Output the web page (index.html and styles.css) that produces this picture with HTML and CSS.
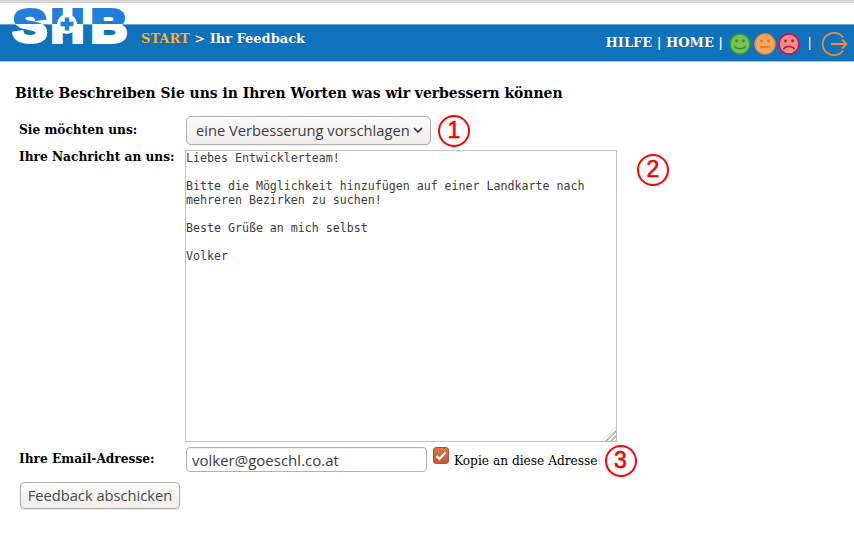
FILE: index.html
```html
<!DOCTYPE html>
<html lang="de">
<head>
<meta charset="utf-8">
<title>Ihr Feedback</title>
<link rel="stylesheet" href="styles.css">
</head>
<body>
<header class="top">
  <div class="bar">
    <svg class="logo" width="120" height="58" viewBox="0 -6 120 58" aria-label="SHB">
      <defs>
        <linearGradient id="split" gradientUnits="userSpaceOnUse" x1="0" y1="0" x2="0" y2="42">
          <stop offset="0.429" stop-color="#1f7fdb"/>
          <stop offset="0.429" stop-color="#fff"/>
        </linearGradient>
      </defs>
      <g class="logo-text">
        <text x="2" y="35.600" textLength="34" lengthAdjust="spacingAndGlyphs">S</text>
        <text x="40" y="35.600" textLength="33" lengthAdjust="spacingAndGlyphs">H</text>
        <text x="80" y="35.600" textLength="36" lengthAdjust="spacingAndGlyphs">B</text>
      </g>
      <circle cx="56" cy="18" r="10" fill="#fff"/>
      <path d="M56 11.500v13M49.500 18h13" stroke="#1f7fdb" stroke-width="4.500" fill="none"/>
    </svg>
    <div class="crumbs"><span class="start">START</span> &gt; Ihr Feedback</div>
    <nav class="nav">
      <span class="navtext">HILFE | HOME |</span>
      <svg class="smiley" width="22" height="22" viewBox="0 0 22 22">
        <circle cx="11" cy="11" r="10" fill="#7cc04f" stroke="#2f9a4a" stroke-width="1.500"/>
        <circle cx="7.500" cy="8" r="1.400" fill="#2c8a40"/><circle cx="14.500" cy="8" r="1.400" fill="#2c8a40"/>
        <path d="M5.500 13c1.500 3.500 9.500 3.500 11 0" stroke="#2c8a40" stroke-width="1.500" fill="none"/>
      </svg>
      <svg class="smiley" width="22" height="22" viewBox="0 0 22 22">
        <circle cx="11" cy="11" r="10" fill="#fba45c" stroke="#f08a36" stroke-width="1.500"/>
        <circle cx="7.500" cy="8" r="1.400" fill="#d9772c"/><circle cx="14.500" cy="8" r="1.400" fill="#d9772c"/>
        <path d="M6 14h10" stroke="#d9772c" stroke-width="1.500" fill="none"/>
      </svg>
      <svg class="smiley" width="22" height="22" viewBox="0 0 22 22">
        <circle cx="11" cy="11" r="10" fill="#f58b8b" stroke="#c8144a" stroke-width="1.500"/>
        <circle cx="7.500" cy="8" r="1.400" fill="#b5173f"/><circle cx="14.500" cy="8" r="1.400" fill="#b5173f"/>
        <path d="M5.500 16.500c1.500-4 9.500-4 11 0" stroke="#b5173f" stroke-width="1.500" fill="none"/>
      </svg>
      <span class="navtext sep">|</span>
      <svg class="exit" width="26" height="26" viewBox="0 0 26 26">
        <path d="M21 6.500A11.200 11.200 0 1 0 21 19.500" stroke="#f68a2c" stroke-width="1.800" fill="none"/>
        <path d="M9 13h15.500M20 8.500l4.500 4.500-4.500 4.500" stroke="#f68a2c" stroke-width="1.800" fill="none"/>
      </svg>
    </nav>
  </div>
</header>
<main class="content">
  <h1 class="title">Bitte Beschreiben Sie uns in Ihren Worten was wir verbessern können</h1>
  <form class="form">
    <label class="lbl lbl-select" for="kind">Sie möchten uns:</label>
    <div class="field field-select">
      <div class="select" id="kind"><span>eine Verbesserung vorschlagen</span>
        <svg width="10" height="6" viewBox="0 0 10 6"><path d="M1 1l4 4 4-4" stroke="#333" stroke-width="1.700" fill="none"/></svg>
      </div>
      <span class="num">1</span>
    </div>
    <label class="lbl lbl-msg" for="msg">Ihre Nachricht an uns:</label>
    <div class="field field-msg">
      <div class="msg-wrap">
        <textarea class="msg" id="msg">Liebes Entwicklerteam!

Bitte die Möglichkeit hinzufügen auf einer Landkarte nach
mehreren Bezirken zu suchen!

Beste Grüße an mich selbst

Volker</textarea>
        <span class="grip"></span>
      </div>
      <span class="num num-2">2</span>
    </div>
    <label class="lbl lbl-mail" for="mail">Ihre Email-Adresse:</label>
    <div class="field field-mail">
      <input class="mail" id="mail" type="text" value="volker@goeschl.co.at">
      <span class="check"><svg width="12" height="10" viewBox="0 0 12 10"><path d="M1.500 5l3 3 6-6.500" stroke="#fff" stroke-width="2.200" fill="none"/></svg></span>
      <span class="copy">Kopie an diese Adresse</span>
      <span class="num num-3">3</span>
    </div>
    <button class="send" type="button">Feedback abschicken</button>
  </form>
</main>
</body>
</html>
```

FILE: styles.css
```css
html, body { margin: 0; padding: 0; background: #fff; }
body { width: 854px; height: 557px; overflow: hidden; font-family: "DejaVu Serif", serif; color: #000; }

.top { border-top: 3px solid #d9d7d3; padding-top: 21px; }
.bar {
  height: 36px;
  background: #0f72bd;
  border-top: 1px solid #6aa5d6;
  border-bottom: 1px solid #9cc4e4;
  display: flex;
  align-items: flex-start;
  position: relative;
  color: #fff;
  font-weight: bold;
}
.logo { position: absolute; left: 11px; top: -25px; }
.logo-text {
  font-family: "Liberation Sans", sans-serif;
  font-weight: bold;
  font-size: 46px;
  stroke-width: 4px;
  fill: url(#split);
  stroke: url(#split);
}
.crumbs { margin: 6px 0 0 141px; font-size: 13px; line-height: 16px; text-shadow: 0 0 1px #0a4f85; }
.start { color: #f8b33e; }
.nav { margin-left: auto; display: flex; align-items: center; height: 36px; padding-right: 6px; }
.navtext { font-size: 13px; line-height: 16px; text-shadow: 0 0 1px #0a4f85; }
.smiley { margin-left: 4px; margin-right: -1.500px; margin-top: 1px; flex: none; }
.navtext + .smiley { margin-left: 6px; }
.sep { margin-left: 9px; font-weight: normal; }
.exit { margin-left: 10px; flex: none; margin-top: 1px; }

.content { padding: 22px 0 0 15px; }
.title { margin: 0; font-size: 13.920px; line-height: 18px; font-weight: bold; }
.form {
  margin-top: 14px;
  display: grid;
  grid-template-columns: 170px 1fr;
  row-gap: 5px;
  padding-left: 4px;
}
.lbl { font-size: 12.200px; font-weight: bold; line-height: 16px; white-space: nowrap; }
.lbl-select { padding-top: 6px; }
.lbl-msg { margin-top: -1px; }
.lbl-mail { padding-top: 4px; }
.field { display: flex; align-items: flex-start; }
.field-select { height: 29px; margin-left: -3px; align-items: center; }
.select {
  box-sizing: border-box;
  width: 245px;
  height: 29px;
  border: 1px solid #b3b1ad;
  border-radius: 5px;
  background: linear-gradient(#fbfbfa, #efeeed);
  box-shadow: 0 1px 1px rgba(0,0,0,.08);
  display: flex;
  align-items: center;
  justify-content: space-between;
  padding: 0 7px 2px 9px;
  font: 14.700px "Open Sans", "Noto Sans", sans-serif;
  color: #3c3c3c;
  white-space: nowrap;
}
.num {
  box-sizing: border-box;
  flex: none;
  width: 32px;
  height: 32px;
  border: 2.500px solid #f00;
  border-radius: 50%;
  color: #f00;
  font: 23px/27px "Liberation Sans", sans-serif;
  -webkit-text-stroke: 0.600px #f00;
  text-align: center;
  margin-left: 7px;
  background: #fff;
}
.field-msg { height: 292px; margin-left: -4px; }
.msg-wrap { position: relative; flex: none; width: 432px; height: 292px; }
.msg {
  display: block;
  box-sizing: border-box;
  width: 432px;
  height: 292px;
  border: 1px solid #c4c2bf;
  margin: 0;
  padding: 0;
  font: 11.620px/14px "DejaVu Sans Mono", monospace;
  color: #3c3c3c;
  background: #fff;
  overflow: hidden;
  resize: none;
  outline: none;
}
.grip {
  position: absolute;
  right: 1px;
  bottom: 1px;
  width: 14px;
  height: 14px;
  background: repeating-linear-gradient(135deg, #fff 0 1.500px, #c2c0bc 1.500px 3.500px);
  clip-path: polygon(100% 0, 100% 100%, 0 100%);
}
.num-2 { margin: 4px 0 0 20px; }
.field-mail { margin-left: -3px; height: 30px; }
.mail {
  box-sizing: border-box;
  width: 241px;
  height: 25px;
  margin: 0;
  border: 1px solid #b3b1ad;
  border-radius: 4px;
  padding: 0 5px;
  font: 15px "Open Sans", "Noto Sans", sans-serif;
  color: #3c3c3c;
  background: #fff;
  box-shadow: inset 0 1px 1px rgba(0,0,0,.06);
}
.check {
  flex: none;
  box-sizing: border-box;
  width: 16px;
  height: 17px;
  margin-left: 6px;
  border-radius: 3px;
  background: linear-gradient(#e0744a, #bf5c36);
  border: 1px solid #a9563a;
  display: flex;
  align-items: center;
  justify-content: center;
}
.copy { margin: 6px 0 0 5px; font-size: 12.200px; line-height: 16px; white-space: nowrap; }
.num-3 { margin: -2px 0 0 7px; }
.send {
  grid-column: 1 / 3;
  justify-self: start;
  box-sizing: border-box;
  width: 160px;
  height: 27px;
  margin: 0 0 0 1px;
  padding: 0 0 2px;
  border: 1px solid #b3b1ad;
  border-radius: 4px;
  background: linear-gradient(#fbfbfa, #efeeed);
  box-shadow: 0 1px 1px rgba(0,0,0,.12);
  font: 14.700px "Open Sans", "Noto Sans", sans-serif;
  color: #4a4a4a;
}
```
